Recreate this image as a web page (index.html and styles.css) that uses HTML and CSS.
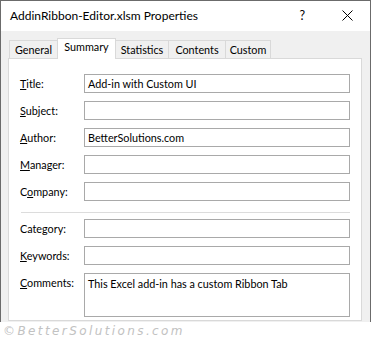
FILE: index.html
```html
<!DOCTYPE html>
<html lang="en">
<head>
    <meta charset="UTF-8">
    <title>AddinRibbon-Editor.xlsm Properties</title>
    <link rel="stylesheet" href="styles.css">
</head>
<body>
    <div class="window">
        <div class="titlebar">
            <span class="title">AddinRibbon-Editor.xlsm Properties</span>
            <span class="help">?</span>
            <svg class="close" width="11" height="11" viewBox="0 0 11 11">
                <path d="M0.5 0.5 L10.5 10.5 M10.5 0.5 L0.5 10.5" stroke="#000" stroke-width="1" fill="none"/>
            </svg>
        </div>

        <div class="dialog">
            <div class="tabs">
                <div class="tab tab-general">General</div>
                <div class="tab tab-summary active">Summary</div>
                <div class="tab tab-statistics">Statistics</div>
                <div class="tab tab-contents">Contents</div>
                <div class="tab tab-custom">Custom</div>
            </div>

            <div class="panel">
                <div class="row">
                    <label><u>T</u>itle:</label>
                    <div class="field">Add-in with Custom UI</div>
                </div>
                <div class="row">
                    <label><u>S</u>ubject:</label>
                    <div class="field"></div>
                </div>
                <div class="row">
                    <label><u>A</u>uthor:</label>
                    <div class="field">BetterSolutions.com</div>
                </div>
                <div class="row">
                    <label><u>M</u>anager:</label>
                    <div class="field"></div>
                </div>
                <div class="row">
                    <label>C<u>o</u>mpany:</label>
                    <div class="field"></div>
                </div>

                <div class="separator"></div>

                <div class="row">
                    <label>Cate<u>g</u>ory:</label>
                    <div class="field"></div>
                </div>
                <div class="row">
                    <label><u>K</u>eywords:</label>
                    <div class="field"></div>
                </div>
                <div class="row row-top">
                    <label><u>C</u>omments:</label>
                    <div class="field field-multi">This Excel add-in has a custom Ribbon Tab</div>
                </div>
            </div>
        </div>
    </div>

    <div class="watermark">©BetterSolutions.com</div>
</body>
</html>
```

FILE: styles.css
```css
:root {
    --win-border: #6b6b6b;
    --dialog-bg: #f0f0f0;
    --tab-border: #d9d9d9;
    --field-border: #a9a9a9;
}

body {
    margin: 0;
    background: #fff;
    font-family: 'Lato', 'Noto Sans', sans-serif;
    font-size: 10.8px;
    color: #000;
    width: 371px;
    height: 346px;
    overflow: hidden;
}

.window {
    width: 371px;
    height: 322px;
    box-sizing: border-box;
    border: 1px solid var(--win-border);
    border-bottom: none;
    display: flex;
    flex-direction: column;
}

.titlebar {
    height: 30px;
    display: flex;
    align-items: center;
    padding-left: 9px;
    background: #fff;
}

.title {
    flex: 1;
    font-size: 12px;
    margin-top: -1px;
}

.help {
    font-size: 12.5px;
    margin-right: 37px;
    margin-top: -1px;
}

.close {
    margin-right: 17px;
    margin-top: -1px;
}

.dialog {
    flex: 1;
    background: var(--dialog-bg);
    padding: 7px 8px 0 7px;
    display: flex;
    flex-direction: column;
}

.tabs {
    display: flex;
    align-items: flex-end;
    height: 21px;
    padding-left: 1px;
    position: relative;
    z-index: 1;
    margin-bottom: -1px;
}

.tab {
    box-sizing: border-box;
    height: 18px;
    border: 1px solid var(--tab-border);
    border-bottom: none;
    background: var(--dialog-bg);
    text-align: center;
    line-height: 17px;
    margin-left: -1px;
    margin-bottom: 1px;
}

.tab:first-child {
    margin-left: 0;
}

.tab.active {
    height: 21px;
    background: #fff;
    line-height: 16px;
    margin-bottom: 0;
    position: relative;
    z-index: 2;
}

.tab-general { width: 49px; }
.tab-summary { width: 59px; }
.tab-statistics { width: 54px; }
.tab-contents { width: 58px; }
.tab-custom { width: 46px; }

.panel {
    height: 263px;
    box-sizing: border-box;
    border: 1px solid var(--tab-border);
    background: #fff;
    padding: 15px 10px 0 11px;
    display: flex;
    flex-direction: column;
    gap: 8px;
}

.row {
    display: flex;
    align-items: center;
}

.row-top {
    align-items: flex-start;
}

.row-top label {
    padding-top: 3px;
}

label {
    width: 64px;
}

.field {
    box-sizing: border-box;
    width: 266px;
    height: 19px;
    border: 1px solid var(--field-border);
    padding: 0 3px;
    line-height: 17px;
    white-space: nowrap;
}

.field-multi {
    height: 44px;
    padding-top: 1px;
}

.separator {
    height: 1px;
    background: #dcdcdc;
    margin: 3px 0 -2px 1px;
    width: 329px;
}

.watermark {
    margin: 2px 0 0 3px;
    font-family: 'DejaVu Sans', sans-serif;
    font-style: italic;
    font-size: 12px;
    letter-spacing: 2.4px;
    color: #c2c2c2;
}
```
